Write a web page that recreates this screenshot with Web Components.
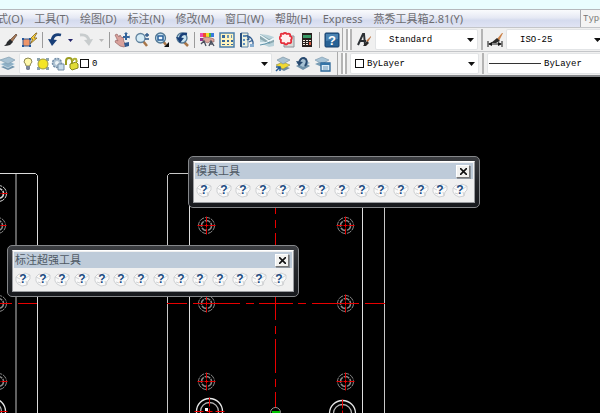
<!DOCTYPE html>
<html lang="zh-CN">
<head>
<meta charset="utf-8">
<title>CAD</title>
<style>
  html, body {
    margin: 0;
    height: 100%;
    overflow: hidden;
    background: #000;
    font-family: "Noto Sans", "Noto Sans CJK SC", sans-serif;
  }
</style>
</head>
<body>
<cad-app></cad-app>

<script>
const ICONS = {
  brush: `<path d="M14 2L8 8l2 2 5-7z" fill="#a87a55" stroke="#5c4438" stroke-width=".7"/><path d="M8 7l3 3-3 3q-3 1-6 1 3-2 3-4z" fill="#292b2e"/>`,
  match: `<path d="M14 1L8 7h3l-3 5 7-6h-3l3-5z" fill="#ffd83d" stroke="#806022" stroke-width=".8"/><path d="M1 7h7v7H1z" fill="#ef9568" stroke="#36588b"/><path d="M0 6h2v2H0zM7 6h2v2H7zM0 13h2v2H0zM7 13h2v2H7z" fill="#21559a"/>`,
  undo: `<path d="M14 3Q6 1 5 9" fill="none" stroke="#183f78" stroke-width="2.8"/><path d="M1 7l4 7 5-6z" fill="#183f78"/>`,
  redo: `<path d="M2 3q8-1 9 6" fill="none" stroke="#c8cccd" stroke-width="2.8"/><path d="M15 7l-4 7-5-6z" fill="#c8cccd"/>`,
  pan: `<path d="M1 3l2-1 2 3 1-2 2 3 1-1 1 5 3 3-3 2-4-1-5-4 1-2 2 1-2-4z" fill="#d9a19b" stroke="#986666" stroke-width=".7"/><path d="M12 0l2 2h-1v2h2V3l1 2-1 2V6h-2v2h-2V6H9V4h2V2h-1z" fill="#34659c"/><path d="M10 11l5-1v4l-4 1z" fill="#315b91"/>`,
  zoomRt: `<path d="M9 9l4 5" stroke="#a97648" stroke-width="2.5"/><circle cx="6.500" cy="6" r="4.500" fill="#d4eaf5" stroke="#61839e" stroke-width="1.300"/><path d="M11 3h4M13 1v4M11 7h4" stroke="#2b5788" stroke-width="1.300"/>`,
  zoomWin: `<path d="M9 9l3 4" stroke="#a97648" stroke-width="2.500"/><circle cx="6.500" cy="6" r="5" fill="#c7e1ef" stroke="#517793" stroke-width="1.300"/><path d="M4 4h5v4H4z" fill="#eff8ff" stroke="#285f9a" stroke-width="1.500"/><path d="M15 10v5h-5z" fill="#111"/>`,
  zoomPrev: `<path d="M10 10l4 4" stroke="#a97648" stroke-width="2.500"/><circle cx="8" cy="6" r="5" fill="#c9e3ef" stroke="#517793" stroke-width="1.300"/><path d="M13 2q-6-1-7 4" fill="none" stroke="#183f78" stroke-width="2.500"/><path d="M2 5l4 6 4-5z" fill="#183f78"/>`,
  props: `<path d="M1 1h3v4H1z" fill="#f04cae"/><path d="M4 1h3v4H4z" fill="#ef4d2c"/><path d="M7 1h3v4H7z" fill="#f5de27"/><path d="M10 1h2v4h-2z" fill="#42b44d"/><path d="M12 1h3v4h-3z" fill="#3979df"/><path d="M1 6h4v3H1z" fill="#943690"/><path d="M4 6q4-2 8 0l3 1v3l-4-1-2 2-5-2z" fill="#dda59a" stroke="#885858" stroke-width=".6"/><path d="M2 12l3-3 2 5M10 14l2-5 3 5M11 12h3" fill="none" stroke="#49505e" stroke-width="1.300"/>`,
  center: `<path d="M1 1h14v14H1z" fill="#fff3bd" stroke="#497eaa" stroke-width="1.500"/><path d="M3 3h3v3H3zM3 8h3v2H3zM3 12h3v1H3zM8 8h2v2H8zM12 8h2v2h-2zM8 12h2v1H8zM12 12h2v1h-2z" fill="#35679b"/><path d="M8 3h2v3H8zM12 3h1v3h-1z" fill="#6c94b4"/>`,
  palettes: `<path d="M2 1h7v14H2z" fill="#edf1df" stroke="#5b82a5"/><path d="M1 1h2v14H1z" fill="#294f7d"/><path d="M4 3h2v2H4zM4 7h2v2H4zM4 11h2v2H4z" fill="#588cbd"/><path d="M6 4q6-1 8 6v3M8 3l2 5M11 5l-3 3M14 8l-4 2" fill="none" stroke="#315e91" stroke-width="1.300"/><path d="M11 12h4v3h-4z" fill="#87add0"/>`,
  sheets: `<path d="M1 2l8 1 6 2v9l-5 1-9-4z" fill="#b9d2da"/><path d="M1 2l9 5 5-1v4l-5 2-9-5z" fill="#8ba8b0"/><path d="M1 3l9 6 5-3M1 11l5 0 9-4" fill="none" stroke="#eef8fb" stroke-width="1.300"/><path d="M1 13l5-1 5-2" fill="none" stroke="#5d93aa"/>`,
  markup: `<path d="M5 4h10v11H5z" fill="#d9d9d5" stroke="#89929b"/><path d="M4 2q2-2 4 0 4-1 3 2 3 1 1 4 1 4-3 3-2 3-4 0-4 1-3-3-3-2 0-4-1-3 2-2z" fill="#fff0ef" stroke="#e6303c" stroke-width="1.800"/>`,
  calc: `<path d="M3 1h10v14H3z" fill="#28201e"/><path d="M4 3h8v3H4z" fill="#3a9a67"/><path d="M4 8h2v1H4zM7 8h2v1H7zM10 8h2v1h-2zM4 10h2v1H4zM7 10h2v1H7zM4 12h2v1H4zM7 12h2v1H7z" fill="#f5eee5"/><path d="M10 10h2v3h-2z" fill="#d55d46"/>`,
  help: `<rect x="1" y="1" width="14" height="14" rx="1" fill="#286295" stroke="#153f6d"/><path d="M2 2h12v5L2 9z" fill="#4b83b2"/><text x="8" y="13" text-anchor="middle" font-family="Liberation Sans" font-size="13" font-weight="700" fill="#fff">?</text>`,
  style: `<path d="M2 13L7 2h1l1 11M4 9h6" fill="none" stroke="#2c3034" stroke-width="2"/><path d="M15 4l-5 5 2 1 3-5z" fill="#bd7542"/><path d="M11 9l2 2-3 3H7z" fill="#2b2928"/>`,
  dimStyle: `<path d="M15 1l-5 6 2 2 4-8z" fill="#ca8147"/><path d="M10 6l3 3-4 2H4z" fill="#282827"/><path d="M1 9v6M15 9v6M2 12h12" stroke="#151515"/><path d="M1 12l4-2v4zM15 12l-4-2v4z" fill="#151515"/>`,
  layers: `<path d="M1 11l7 3 7-3-6-3z" fill="#7194ad"/><path d="M0 8l8 4 7-4-6-3z" fill="#8eb0c6" stroke="#e7f1f6" stroke-width=".6"/><path d="M0 4l8 4 7-4-6-3z" fill="#a7c1d2" stroke="#7795aa" stroke-width=".6"/>`,
  bulb: `<path d="M6 10q0-2-2-4 0-4 4-4t4 4q-2 2-2 4z" fill="#fff9ab" stroke="#8c8752"/><path d="M6 10h4v3l-1 1H7l-1-1z" fill="#7c8698"/>`,
  sun: `<path d="M2 2h3v3H2zM11 2h3v3h-3zM2 11h3v3H2zM11 11h3v3h-3z" fill="#8ba2ad"/><circle cx="8" cy="8" r="5" fill="#f4e526" stroke="#9c973e"/>`,
  viewport: `<circle cx="7" cy="7" r="4.500" fill="#afc3d3" stroke="#728da7" stroke-width="1.500" stroke-dasharray="2 1"/><circle cx="7" cy="7" r="2" fill="#edf4f7"/><path d="M8 8h6v6H8z" fill="#c7dcec" stroke="#758da4"/>`,
  lock: `<path d="M1 9V5q0-3 3-3t3 3v3" fill="none" stroke="#9c9d22" stroke-width="2"/><path d="M5 8l6-2 2 2v4l-6 2-2-2z" fill="#e1dc36" stroke="#898a21"/><path d="M8 5q0-3 3-2l1 3" fill="none" stroke="#afb130" stroke-width="2"/>`,
  makeCur: `<path d="M3 12l6-2 6 2-6 3z" fill="#718ca0"/><path d="M1 9l7-3 7 3-7 4z" fill="#f0d932" stroke="#8d8d46" stroke-width=".6"/><path d="M2 4l6-3 7 3-7 4z" fill="#a9c1d0" stroke="#70899b" stroke-width=".6"/><path d="M1 15l4-4M1 11h4v4" fill="none" stroke="#235a94" stroke-width="1.500"/>`,
  layPrev: `<path d="M1 10l7 4 7-4-6-4z" fill="#6f91a9"/><path d="M1 7l7 4 7-4-6-4z" fill="#a5c0d2"/><path d="M10 10q4-6-1-8-4 0-5 5" fill="none" stroke="#28496f" stroke-width="2"/><path d="M1 5l3 5 4-4z" fill="#28496f"/>`,
  layState: `<path d="M0 8l7-3 6 3-6 3z" fill="#799db5"/><path d="M0 4l7-3 7 3-7 4z" fill="#a8c4d6" stroke="#7694a9" stroke-width=".6"/><path d="M6 7h9v8H6z" fill="#dcedf7" stroke="#2a6698" stroke-width="1.300"/><path d="M6 7h9v2H6z" fill="#3475a8"/><path d="M8 11h5M8 13h5" stroke="#739bb9"/>`
};

function svgIcon(name) {
  return `<svg width="16" height="16" viewBox="0 0 16 16" aria-hidden="true">${ICONS[name]}</svg>`;
}

class CadElement extends HTMLElement {
  connectedCallback() {
    if (this.shadowRoot) return;
    const template = document.createElement("template");
    template.innerHTML = `<style>${this.css()}</style>${this.html()}`;
    this.attachShadow({ mode: "open" }).appendChild(template.content);
  }
  css() { return ""; }
  html() { return ""; }
}

class ToolIcon extends CadElement {
  css() {
    return `
      :host { display: block; flex: none; }
      button { display: block; width: 16px; height: 16px; padding: 0; border: 0; background: none; }
      svg { display: block; }
    `;
  }
  html() {
    const name = this.getAttribute("name");
    return `<button type="button" aria-label="${name}">${svgIcon(name)}</button>`;
  }
}

class ToolArrow extends CadElement {
  css() {
    return `
      :host { display: block; flex: none; color: #24246a; }
      :host([off]) { color: #bbb; }
      button { display: block; width: 7px; height: 16px; padding: 0; border: 0; background: none; color: inherit; }
      svg { display: block; }
    `;
  }
  html() {
    return `<button type="button" aria-label="more"><svg width="7" height="16"><path d="M1 7h5l-2.500 3z" fill="currentColor"/></svg></button>`;
  }
}

class ToolSep extends CadElement {
  css() {
    return `:host { display: block; flex: none; width: 1px; height: 16px; background: #9b9b9b; }`;
  }
}

class ToolGrip extends CadElement {
  css() {
    return `
      :host {
        display: block; flex: none; align-self: stretch; box-sizing: border-box;
        width: 6px; margin: 1px 0; border: solid #b4b4b4; border-width: 0 2px; background: #fbfbfb;
      }
      :host([thin]) { width: 2px; border-width: 0 0 0 2px; }
    `;
  }
}

class ToolCombo extends CadElement {
  css() {
    return `
      :host { display: flex; min-width: 0; height: 19px; align-items: center; background: #fff; border-radius: 1px; box-shadow: 0 0 0 1px #e2e4e6; }
      label { display: flex; flex: 1; min-width: 0; align-items: center; height: 100%; }
      select {
        flex: 1; min-width: 0; height: 100%; padding: 0; border: 0; background: none; outline: 0;
        appearance: none; font: 9px "Liberation Mono", monospace; color: #000;
      }
      svg { flex: none; margin-right: 3px; }
    `;
  }
  html() {
    return `
      <label>
        <slot></slot>
        <select aria-label="${this.getAttribute("label")}"><option>${this.getAttribute("value")}</option></select>
      </label>
      <svg width="7" height="4" aria-hidden="true"><path d="M0 0h7L3.500 4z" fill="#111"/></svg>
    `;
  }
}

class MenuBar extends CadElement {
  css() {
    return `
      :host { display: block; border-top: 1px solid #b5b8bc; }
      nav {
        display: flex; align-items: center; height: 17px; overflow: hidden;
        background: linear-gradient(#fafbfd, #e6e9f4 45%, #d5dbee 60%, #e0e4f4);
      }
      ul { display: flex; flex: 1; gap: 11px; min-width: 0; margin: 0 0 0 -3px; padding: 0; list-style: none; }
      button { display: block; padding: 0; border: 0; background: none; font: inherit; font-size: 11px; line-height: 16px; color: #6c6c70; white-space: nowrap; }
      input {
        box-sizing: border-box; width: 20px; height: 17px; padding: 0 0 0 2px; border: 1px solid #a9abb0; border-width: 0 0 0 1px;
        background: #f4f4f4; font: 9px "Liberation Mono", monospace; color: #777;
      }
    `;
  }
  html() {
    const items = ["式(O)", "工具(T)", "绘图(D)", "标注(N)", "修改(M)", "窗口(W)", "帮助(H)", "Express", "燕秀工具箱2.81(Y)"];
    return `
      <nav>
        <ul>${items.map((t) => `<li><button type="button">${t}</button></li>`).join("")}</ul>
        <input aria-label="Search" value="Type">
      </nav>
    `;
  }
}

class ToolPalette extends CadElement {
  css() {
    return `
      :host {
        display: block; box-sizing: border-box; width: 292px; padding: 4px;
        border: 1px solid #85878a; border-radius: 5px;
        background: linear-gradient(#3b3d41, #24262a 50%, #17191d);
      }
      section { background: #f0f0f0; border: 1px solid #9a9ca0; border-top-color: #fff; padding: 1px; }
      header { display: flex; align-items: center; justify-content: space-between; height: 16px; padding: 0 3px 0 1px; background: #becbd9; }
      h2 { margin: 0; font-size: 11px; line-height: 16px; font-weight: 400; color: #4e5964; }
      header button {
        width: 14px; height: 13px; padding: 0; border: 1px solid #fff; border-right-color: #777; border-bottom-color: #777;
        background: #f2f2f0; box-shadow: 1px 1px 0 #8d959d;
      }
      svg { display: block; margin: auto; }
      .row { display: flex; justify-content: space-between; align-items: center; height: 22px; padding: 0 5px 0 1px; }
      .row button { width: 16px; height: 16px; padding: 0; border: 0; background: none; }
    `;
  }
  html() {
    const macro = `
      <button type="button" aria-label="macro">
        <svg width="16" height="16" viewBox="0 0 16 16">
          <path d="M1 6l3-3 3 1 3-2 5 2v4l-2 2-1 4-5 1-4-2-2-3z" fill="#fafafa" stroke="#cfd1d3"/>
          <path d="M1 6l4 2M11 7l4-3M3 11l3 1M11 10l1 4" stroke="#d0d2d4"/>
          <text x="8" y="12" text-anchor="middle" font-family="Liberation Sans" font-size="12" font-weight="700" fill="#1d4b82">?</text>
        </svg>
      </button>`;
    return `
      <section>
        <header>
          <h2><slot></slot></h2>
          <button type="button" aria-label="close"><svg width="7" height="7"><path d="M0 0l7 7M7 0L0 7" stroke="#111" stroke-width="1.600"/></svg></button>
        </header>
        <div class="row">${macro.repeat(14)}</div>
      </section>
    `;
  }
}

class CadDrawing extends CadElement {
  css() {
    return `
      :host { display: block; min-height: 0; background: #000; overflow: hidden; }
      svg { display: block; width: 100%; height: 100%; }
    `;
  }
  hole(x, y, stroke = "#8b8b8b") {
    return `
      <g transform="translate(${x} ${y})" fill="none">
        <circle r="8" stroke="${stroke}" stroke-dasharray="5 1"/>
        <circle r="5" stroke="${stroke}" stroke-width="1.500" stroke-dasharray="6 1"/>
        <path d="M-9 0h6M-2 0h4M3 0h6M0-9v6M0-2v4M0 3v6" stroke="#e80000"/>
      </g>`;
  }
  pillar(x, y) {
    return `
      <g transform="translate(${x} ${y})" fill="none">
        <circle r="13" stroke="#e8e8e8" stroke-width="1.300"/>
        <circle r="9" stroke="#b5b5b5" stroke-width="1.300"/>
        <path d="M-15 0h9M-3 0h6M6 0h9M0-14v9M0-3v6" stroke="#e80000"/>
      </g>`;
  }
  html() {
    // model coordinates start 77px above the visible area
    return `
      <svg aria-hidden="true">
        <g transform="translate(0 -77)">
          <g fill="none">
            <path d="M0 173.500H35.500l2 2V800" stroke="#dcdcdc"/>
            <path d="M16 174V800" stroke="#808080" stroke-width="1.500"/>
            <path d="M167.500 800V175.500l2-2H382.500l2 2V800" stroke="#c8c8c8"/>
            <path d="M189.500 174V800M362.500 174V800" stroke="#dedede"/>
            <path d="M275.500 180V408" stroke="#e80000" stroke-dasharray="34 6 8 5"/>
            <path d="M0 303.500h12M18 303.500h19M167 303.500h20M193 303.500h47M246 303.500h8M259 303.500h34M298 303.500h8M312 303.500h47M365 303.500h20" stroke="#e80000"/>
          </g>
          ${this.hole(-1.5, 193.5, "#d8d8d8")}
          ${this.hole(-2.5, 225.5)}${this.hole(-1.5, 303.5)}${this.hole(-1.5, 381.5)}
          ${[225.5, 303.5, 381.5].map((y) => this.hole(206.5, y) + this.hole(345.5, y)).join("")}
          ${this.pillar(-7.5, 411.5)}${this.pillar(209.5, 411.5)}${this.pillar(342.5, 413.5)}
          <path d="M205 408h3v3h-3z" fill="#fff"/>
          <circle cx="275.500" cy="412.500" r="5" fill="none" stroke="#9a9a9a"/>
          <path d="M272 411h8v5h-8z" fill="#00c000"/>
        </g>
      </svg>
    `;
  }
}

class CadApp extends CadElement {
  css() {
    return `
      :host { display: flex; flex-direction: column; height: 100vh; position: relative; overflow: hidden; }
      .top { height: 9px; flex: none; background: #e9fdfe; }
      .bars { flex: none; background: #f0f0f0; border-bottom: 2px solid #85878a; overflow: hidden; }
      .line { display: flex; align-items: center; box-sizing: border-box; height: 24px; border-top: 1px solid #c4c6c9; }
      .bar { display: flex; align-items: center; gap: 4px; box-sizing: border-box; height: 100%; }
      .std { flex: none; width: 343px; justify-content: space-between; padding: 0 5px 0 2px; border-right: 1px solid #aaa; }
      .lay { flex: none; width: 338px; padding-right: 6px; border-right: 1px solid #aaa; }
      .rest { flex: 1; min-width: 0; padding-left: 3px; }
      .lay tool-combo { flex: 1; }
      .text { flex: none; width: 101px; }
      .color { flex: none; width: 127px; }
      .fill { flex: 1; margin-right: -4px; }
      .wide { flex: 1; margin-right: -24px; }
      .pad { width: 13px; flex: none; }
      .marks { display: flex; }
      .marks svg { display: block; margin-right: -1px; }
      .box { flex: none; width: 7px; height: 7px; border: 1px solid #111; margin: 0 3px 0 4px; }
      .marks + .box { margin-left: 0; }
      .dash { flex: none; width: 52px; height: 1px; background: #333; margin: 0 3px 0 1px; }
      cad-drawing { flex: 1; }
      .window { position: absolute; }
      .mold { left: 188px; top: 156px; }
      .dims { left: 7px; top: 245px; }
    `;
  }
  html() {
    const icon = (n) => `<tool-icon name="${n}"></tool-icon>`;
    const sep = "<tool-sep></tool-sep>";
    return `
      <div class="top"></div>
      <menu-bar></menu-bar>
      <div class="bars">
        <div class="line">
          <div class="bar std">
            ${icon("brush")}${icon("match")}${sep}
            ${icon("undo")}<tool-arrow></tool-arrow>${icon("redo")}<tool-arrow off></tool-arrow>${sep}
            ${["pan", "zoomRt", "zoomWin", "zoomPrev"].map(icon).join("")}${sep}
            ${["props", "center", "palettes", "sheets", "markup", "calc"].map(icon).join("")}${sep}
            ${icon("help")}
          </div>
          <div class="bar rest">
            <tool-grip></tool-grip>
            ${icon("style")}
            <tool-combo class="text" label="Text style" value="Standard"><span class="pad"></span></tool-combo>
            <tool-grip thin></tool-grip>
            ${icon("dimStyle")}
            <tool-combo class="fill" label="Dimension style" value="ISO-25"><span class="pad"></span></tool-combo>
          </div>
        </div>
        <div class="line">
          <div class="bar lay">
            ${icon("layers")}
            <tool-combo label="Layer" value="0">
              <span class="marks">${["bulb", "sun", "viewport", "lock"].map(svgIcon).join("")}</span>
              <span class="box"></span>
            </tool-combo>
            ${["makeCur", "layPrev", "layState"].map(icon).join("")}
          </div>
          <div class="bar rest">
            <tool-grip></tool-grip>
            <tool-combo class="color" label="Color" value="ByLayer"><span class="box"></span></tool-combo>
            <tool-grip thin></tool-grip>
            <tool-combo class="wide" label="Linetype" value="ByLayer"><span class="dash"></span></tool-combo>
          </div>
        </div>
      </div>
      <cad-drawing></cad-drawing>
      <tool-palette class="window mold">模具工具</tool-palette>
      <tool-palette class="window dims">标注超强工具</tool-palette>
    `;
  }
}

customElements.define("tool-icon", ToolIcon);
customElements.define("tool-arrow", ToolArrow);
customElements.define("tool-sep", ToolSep);
customElements.define("tool-grip", ToolGrip);
customElements.define("tool-combo", ToolCombo);
customElements.define("menu-bar", MenuBar);
customElements.define("tool-palette", ToolPalette);
customElements.define("cad-drawing", CadDrawing);
customElements.define("cad-app", CadApp);
</script>
</body>
</html>
